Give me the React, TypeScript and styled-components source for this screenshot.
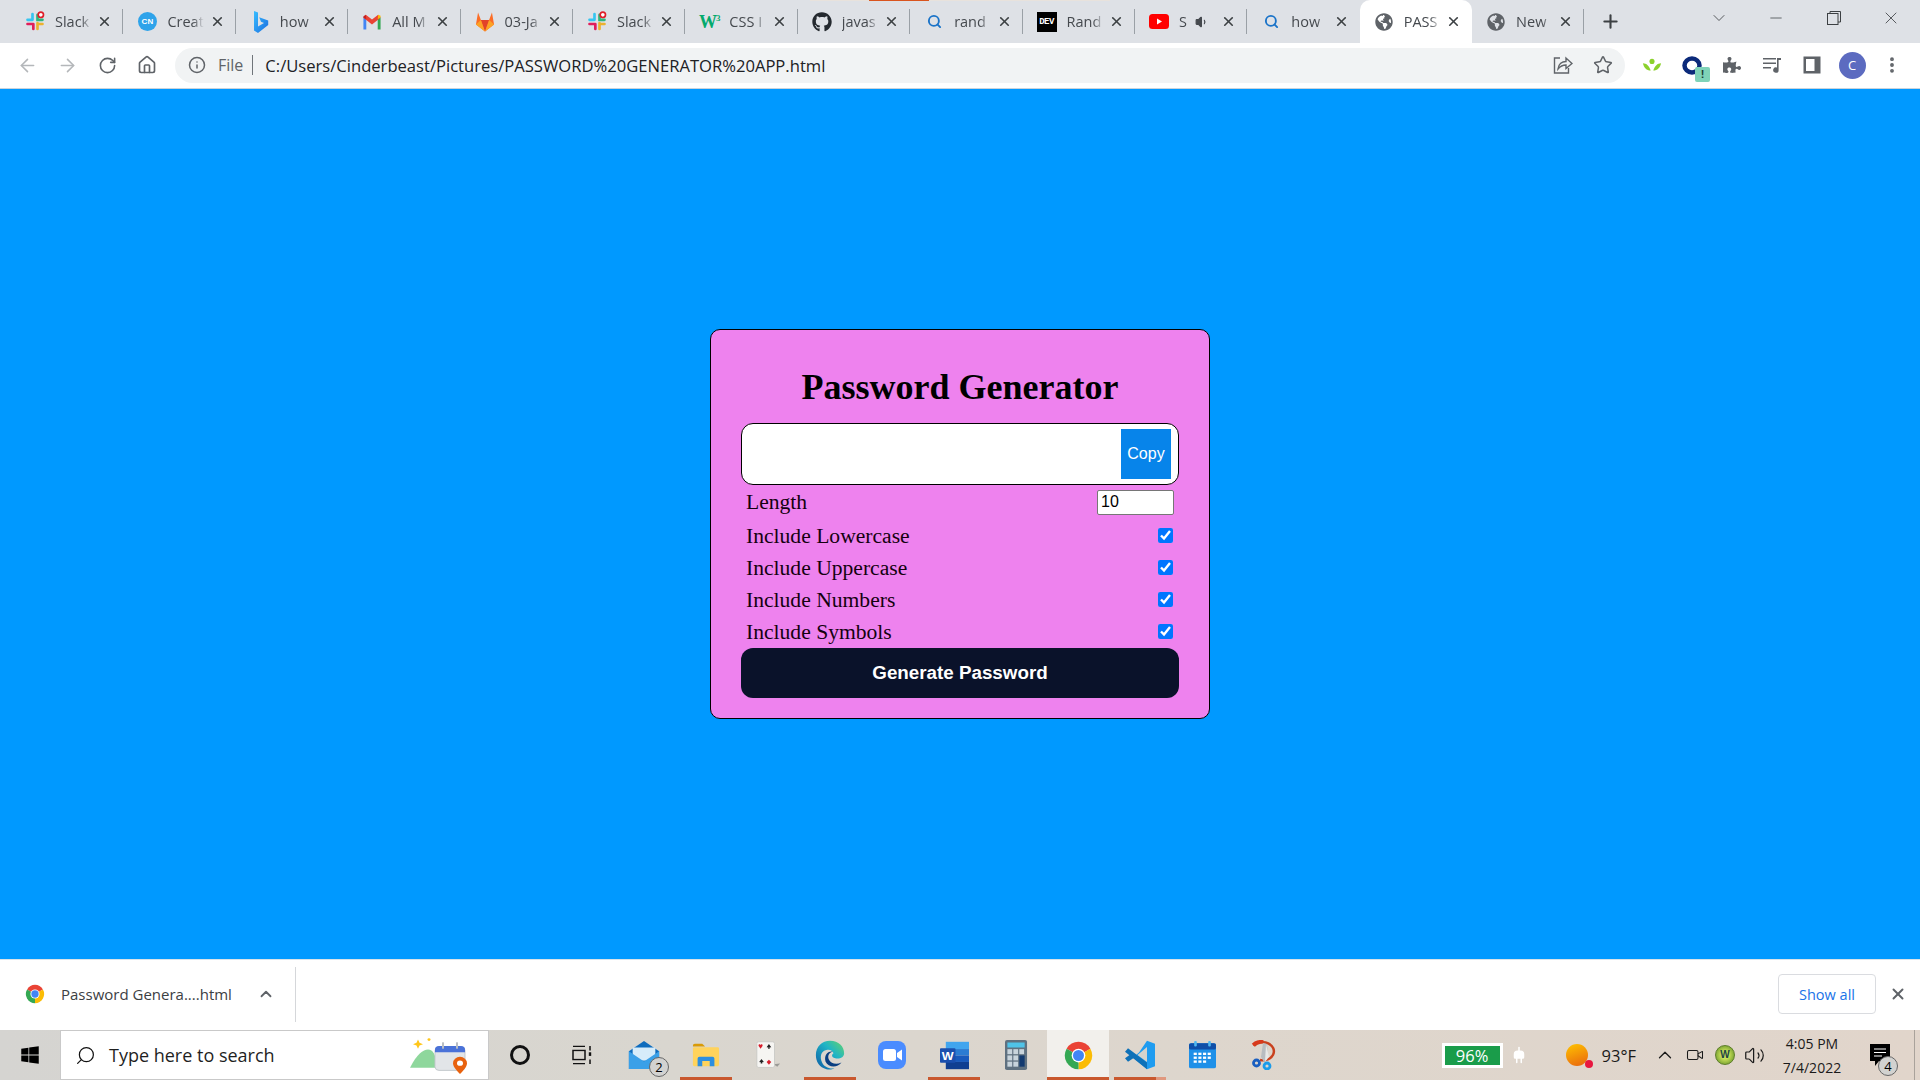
import React from 'react';
import styled, { createGlobalStyle } from 'styled-components';
import {
  ArrowLeft,
  ArrowRight,
  RotateCw,
  Home,
  Info,
  Star,
  X,
  Plus,
  ChevronDown,
  ChevronUp,
  Minus,
  Search,
  EllipsisVertical,
  Volume1,
  Volume2,
  Video,
  Plug,
} from 'lucide-react';
import { FaGithub, FaGlobeAmericas, FaPuzzlePiece, FaWindows } from 'react-icons/fa';

const GlobalStyle = createGlobalStyle`
  html, body {
    margin: 0;
    padding: 0;
    height: 100%;
    overflow: hidden;
  }
  * {
    box-sizing: border-box;
  }
`;

const uiFont = `"Open Sans", "Noto Sans", sans-serif`;

const Screen = styled.div`
  width: 1920px;
  height: 1080px;
  display: flex;
  flex-direction: column;
  font-family: ${uiFont};
`;

/* ---------- tab strip ---------- */

const TabStrip = styled.div`
  position: relative;
  height: 43px;
  flex: none;
  display: flex;
  align-items: stretch;
  padding-left: 11px;
  background: #dee1e6;
`;

const LoadingLine = styled.div`
  position: absolute;
  top: 0;
  left: 810px;
  width: 300px;
  height: 1px;
  background: #e8e2dc;

  &::after {
    content: '';
    position: absolute;
    top: 0;
    left: 59px;
    width: 60px;
    height: 1px;
    background: #d9541e;
  }
`;

const TabItem = styled.div<{ $active?: boolean; $divider?: boolean }>`
  position: relative;
  width: 112.4px;
  flex: none;
  display: flex;
  align-items: center;
  padding: 0 11px 0 14px;
  border-radius: 10px 10px 0 0;
  background: ${({ $active }) => ($active ? '#fff' : 'transparent')};

  &::after {
    content: '';
    display: ${({ $divider }) => ($divider ? 'block' : 'none')};
    position: absolute;
    right: 0;
    top: 9px;
    height: 25px;
    width: 1px;
    background: #9aa0a6;
  }
`;

const FaviconSlot = styled.span`
  width: 20px;
  height: 20px;
  flex: none;
  display: flex;
  align-items: center;
  justify-content: center;
`;

const TabTitle = styled.span<{ $narrow?: boolean }>`
  margin-left: 10px;
  width: ${({ $narrow }) => ($narrow ? '10px' : '37px')};
  flex: none;
  overflow: hidden;
  white-space: nowrap;
  font-size: 14.5px;
  color: #45494e;
  -webkit-mask-image: linear-gradient(90deg, #000 70%, transparent 100%);
  mask-image: linear-gradient(90deg, #000 70%, transparent 100%);
`;

const TabClose = styled.span`
  margin-left: auto;
  display: flex;
  color: #3c4043;
`;

const MuteIcon = styled.span`
  margin-left: 6px;
  display: flex;
  color: #45494e;
`;

const CnBadge = styled.span`
  width: 19px;
  height: 19px;
  border-radius: 50%;
  background: #2ea3ea;
  color: #fff;
  font: bold 8px 'Liberation Sans', sans-serif;
  display: flex;
  align-items: center;
  justify-content: center;
`;

const W3Mark = styled.span`
  color: #04aa6d;
  font: bold 18px/20px 'Liberation Serif', serif;
  letter-spacing: -1px;

  sup {
    font-size: 9px;
    line-height: 0;
    color: #04aa6d;
  }
`;

const DevMark = styled.span`
  width: 20px;
  height: 20px;
  background: #000;
  color: #fff;
  font: bold 9px/20px 'Liberation Mono', monospace;
  letter-spacing: -0.5px;
  text-align: center;
`;

const NewTabButton = styled.div`
  width: 52px;
  flex: none;
  display: flex;
  align-items: center;
  justify-content: center;
  color: #3c4043;
`;

const WindowControls = styled.div`
  margin-left: auto;
  display: flex;
  height: 36px;
  color: #3c4043;
`;

const WindowButton = styled.div<{ $w?: number }>`
  width: ${({ $w }) => $w ?? 57.5}px;
  display: flex;
  align-items: center;
  justify-content: center;
`;

const RestoreIcon = () => (
  <svg width="14" height="14" viewBox="0 0 14 14" fill="none" stroke="#3c4043" strokeWidth="1">
    <rect x="0.5" y="2.5" width="10.5" height="11" />
    <path d="M3 2.5V.5h10.5v10.5H11" />
  </svg>
);

/* ---------- toolbar ---------- */

const Toolbar = styled.div`
  height: 46px;
  flex: none;
  display: flex;
  align-items: center;
  padding: 0 8px 1px 7px;
  background: #fff;
  border-bottom: 1px solid #c9d3dc;
`;

const ToolButton = styled.div<{ $dim?: boolean }>`
  width: 40px;
  height: 35px;
  flex: none;
  display: flex;
  align-items: center;
  justify-content: center;
  color: ${({ $dim }) => ($dim ? '#b4b7ba' : '#5f6368')};
`;

const Omnibox = styled.div`
  flex: 1;
  height: 35px;
  margin: 0 7px 0 8px;
  display: flex;
  align-items: center;
  padding: 0 2px 0 13px;
  border-radius: 18px;
  background: #f1f3f4;
`;

const SchemeLabel = styled.span`
  margin-left: 12px;
  padding-right: 9px;
  border-right: 1px solid #70757a;
  font-size: 16px;
  line-height: 20px;
  color: #5f6368;
`;

const UrlText = styled.span`
  margin-left: 12px;
  flex: 1;
  font-size: 16.6px;
  color: #202124;
  white-space: nowrap;
`;

const Avatar = styled.span`
  width: 27px;
  height: 27px;
  border-radius: 50%;
  background: #5c6bc0;
  color: #fff;
  font: 13px/27px ${uiFont};
  text-align: center;
`;

const ExtensionWrap = styled.span`
  position: relative;
  display: flex;
`;

const ExtensionBadge = styled.span`
  position: absolute;
  right: -8px;
  bottom: -7px;
  width: 15px;
  height: 15px;
  border-radius: 2px;
  background: #7fd3b8;
  color: #1d3b33;
  font: bold 11px/15px 'Liberation Sans', sans-serif;
  text-align: center;
`;

/* ---------- page with the generator card ---------- */

const Page = styled.main`
  flex: 1;
  display: flex;
  align-items: center;
  justify-content: center;
  background: #0099ff;
`;

const Card = styled.section`
  width: 500px;
  height: 390px;
  padding: 36px 30px 20px;
  border: 1px solid #000;
  border-radius: 10px;
  background: #ee82ee;
  font-family: 'Liberation Serif', serif;
`;

const Title = styled.h2`
  margin: 0 0 17px;
  padding-top: 1px;
  height: 40px;
  font-size: 36px;
  line-height: 40px;
  font-weight: bold;
  text-align: center;
  color: #000;
`;

const ResultBox = styled.div`
  height: 62px;
  display: flex;
  align-items: center;
  justify-content: flex-end;
  padding-right: 7px;
  border: 1px solid #000;
  border-radius: 12px;
  background: #fff;
`;

const CopyButton = styled.button`
  width: 50px;
  height: 50px;
  padding: 0;
  border: none;
  background: #0784ea;
  color: #fff;
  font: 16px 'Liberation Sans', sans-serif;
`;

const OptionRow = styled.label<{ $tall?: boolean }>`
  height: ${({ $tall }) => ($tall ? 35 : 32)}px;
  display: flex;
  align-items: center;
  justify-content: space-between;
  padding: 0 6px 0 5px;
  font-size: 21.6px;
  color: #14010f;
`;

const LengthRow = styled(OptionRow)`
  padding-right: 5px;
  padding-bottom: 1px;
`;

const LengthInput = styled.input`
  width: 77px;
  height: 25px;
  padding: 1px 3px;
  border: 1px solid #767676;
  border-radius: 2px;
  background: #fff;
  font: 16px 'Liberation Sans', sans-serif;
  color: #000;
`;

const OptionCheck = styled.input`
  width: 15px;
  height: 15px;
  margin: 0 0 1px;
  accent-color: #0075ff;
`;

const GenerateButton = styled.button`
  width: 100%;
  height: 50px;
  border: none;
  border-radius: 12px;
  background: #0a122a;
  color: #fff;
  font: bold 18.8px 'Liberation Sans', sans-serif;
`;

/* ---------- download shelf ---------- */

const DownloadBar = styled.div`
  height: 71px;
  flex: none;
  display: flex;
  align-items: center;
  padding: 0 0 2px 24px;
  background: #fff;
  border-top: 1px solid #d8e2e8;
`;

const DownloadName = styled.span`
  margin-left: 15px;
  width: 196px;
  font-size: 15px;
  color: #3c4043;
  white-space: nowrap;
`;

const ShelfDivider = styled.span`
  width: 1px;
  height: 55px;
  margin-left: 20px;
  background: #d5d7da;
`;

const ShowAllButton = styled.button`
  margin-left: auto;
  width: 98px;
  height: 40px;
  border: 1px solid #dadce0;
  border-radius: 4px;
  background: #fff;
  color: #1a73e8;
  font: 14.5px ${uiFont};
`;

const ShelfClose = styled.span`
  width: 44px;
  display: flex;
  justify-content: center;
  color: #5f6368;
`;

/* ---------- taskbar ---------- */

const Taskbar = styled.footer`
  height: 50px;
  flex: none;
  display: flex;
  align-items: stretch;
  background: linear-gradient(90deg, #d5d4d1 0%, #d9d6cf 35%, #ddd6cd 60%, #e1d5cb 100%);
`;

const StartButton = styled.div`
  width: 60px;
  flex: none;
  display: flex;
  align-items: center;
  justify-content: center;
  color: #000;
`;

const SearchBox = styled.div`
  width: 429px;
  flex: none;
  display: flex;
  align-items: center;
  padding: 0 19px 0 14px;
  border: 1px solid #c9c9c9;
  background: #fff;
`;

const SearchText = styled.span`
  margin-left: 13px;
  font-size: 18px;
  color: #1f1f1f;
`;

const SearchArt = styled.span`
  margin-left: auto;
  display: flex;
`;

const TaskSlot = styled.div<{ $mark?: 'short' | 'full' | 'split'; $active?: boolean }>`
  position: relative;
  width: 62px;
  flex: none;
  display: flex;
  align-items: center;
  justify-content: center;
  background: ${({ $active }) => ($active ? '#f2f0ec' : 'transparent')};

  &::after {
    content: '';
    display: ${({ $mark }) => ($mark ? 'block' : 'none')};
    position: absolute;
    bottom: 0;
    height: 3px;
    left: ${({ $mark }) => ($mark === 'full' ? 0 : 5)}px;
    right: ${({ $mark }) => ($mark === 'full' ? 0 : 5)}px;
    background: ${({ $mark }) =>
      $mark === 'split'
        ? 'linear-gradient(90deg, #c9582e 80%, #e0987e 80%)'
        : '#c9582e'};
  }
`;

const CountBadge = styled.span<{ $r: number; $b: number }>`
  position: absolute;
  right: ${({ $r }) => $r}px;
  bottom: ${({ $b }) => $b}px;
  width: 20px;
  height: 20px;
  border-radius: 50%;
  border: 1px solid #666;
  background: #d2d2d0;
  color: #000;
  font: 13px/18px ${uiFont};
  text-align: center;
`;

const Tray = styled.div`
  margin-left: auto;
  padding-right: 5px;
  display: flex;
  align-items: center;
  color: #1a1a1a;
`;

const BatteryBox = styled.span`
  width: 61px;
  height: 25px;
  border: 3px solid #fff;
  background: #1a9c4a;
  color: #fff;
  font-size: 16.5px;
  line-height: 19px;
  text-align: center;
`;

const PlugWrap = styled.span`
  margin-left: 6px;
  width: 20px;
  display: flex;
  justify-content: center;
  color: #fff;
`;

const WeatherWrap = styled.span`
  position: relative;
  margin-left: 37px;
  width: 22px;
  height: 22px;
  border-radius: 50%;
  background: linear-gradient(160deg, #ffc400, #e8630f);

  &::after {
    content: '';
    position: absolute;
    right: -5px;
    bottom: -2px;
    width: 8px;
    height: 8px;
    border-radius: 50%;
    background: #e8173f;
  }
`;

const Temperature = styled.span`
  margin-left: 14px;
  font-size: 16.5px;
`;

const TrayIcon = styled.span<{ $gap: number }>`
  margin-left: ${({ $gap }) => $gap}px;
  display: flex;
`;

const WgetDot = styled.span`
  width: 20px;
  height: 20px;
  border-radius: 50%;
  background: radial-gradient(circle, #c8e05a 30%, #6e9a2c 85%);
  border: 1px solid #5d7d2a;
  color: #244;
  font: bold 10px/18px 'Liberation Sans', sans-serif;
  text-align: center;
`;

const Clock = styled.div`
  margin-left: 14px;
  width: 66px;
  display: flex;
  flex-direction: column;
  align-items: center;
  gap: 5px;
  font-size: 14px;
  line-height: 19px;
  white-space: nowrap;
`;

const NotifySlot = styled.div`
  position: relative;
  width: 70px;
  height: 50px;
  display: flex;
  align-items: center;
  justify-content: center;
  border-right: 1px solid #a9a29b;
`;

/* ---------- logos ---------- */

const ChromeLogo = ({ size }: { size: number }) => (
  <svg width={size} height={size} viewBox="0 0 48 48">
    <path d="M24 24L6.7 14A20 20 0 0 1 41.3 14Z" fill="#ea4335" />
    <path d="M24 24L41.3 14A20 20 0 0 1 24 44Z" fill="#fbbc05" />
    <path d="M24 24L24 44A20 20 0 0 1 6.7 14Z" fill="#34a853" />
    <circle cx="24" cy="24" r="10" fill="#fff" />
    <circle cx="24" cy="24" r="8" fill="#4285f4" />
  </svg>
);

const SlackLogo = () => (
  <svg width="21" height="21" viewBox="0 0 24 24" fill="none" strokeWidth="3.2" strokeLinecap="round">
    <path d="M9 3v7M3 10h6" stroke="#36c5f0" />
    <path d="M10 15H3M10 15v6" stroke="#e01e5a" />
    <path d="M15 14v7M15 15h6" stroke="#ecb22e" />
    <path d="M15 4v6h6" stroke="#2eb67d" />
    <circle cx="19" cy="4" r="3.2" fill="#fff" stroke="#e01e2a" strokeWidth="2" />
  </svg>
);

const BingLogo = () => (
  <svg width="20" height="24" viewBox="0 0 20 24">
    <defs>
      <linearGradient id="bingFill" x1="0" y1="0" x2="1" y2="1">
        <stop offset="0" stopColor="#37bdff" />
        <stop offset="1" stopColor="#1b6ee0" />
      </linearGradient>
    </defs>
    <path d="M4 1l4 1.5v14l6-3.4-3-1.4-1.8-4.4 9 3.2v4.6L8 23l-4-2.4z" fill="url(#bingFill)" />
  </svg>
);

const GmailLogo = () => (
  <svg width="21" height="18" viewBox="0 0 21 18">
    <path d="M1.5 17V4l3 2v11z" fill="#4285f4" />
    <path d="M16.5 17V6l3-2v13z" fill="#34a853" />
    <path d="M1.5 4.5L4 1.5l6.5 5 6.5-5 2.5 3-9 7z" fill="#ea4335" />
    <path d="M16.5 6l3-2 0-1.5L17 1.5z" fill="#fbbc05" />
    <path d="M1.5 4.5V3L4 1.5 4.5 6z" fill="#c5221f" />
  </svg>
);

const GitlabLogo = () => (
  <svg width="21" height="22" viewBox="0 0 21 22">
    <path d="M10.5 21L1 13.5 3.2 1l3 8h8.6l3-8L20 13.5z" fill="#fc6d26" />
    <path d="M10.5 21L6.2 9h8.6z" fill="#e24329" />
    <path d="M10.5 21L1 13.5 6.2 9zM10.5 21L20 13.5 14.8 9z" fill="#fca326" />
  </svg>
);

const YoutubeLogo = () => (
  <svg width="20" height="15" viewBox="0 0 20 15">
    <rect width="20" height="15" rx="3.5" fill="#f00" />
    <path d="M8 4.5l5 3-5 3z" fill="#fff" />
  </svg>
);

const SearchFavicon = () => <Search size={15} strokeWidth={3} color="#1a73c8" />;
const GlobeFavicon = () => <FaGlobeAmericas size={18} color="#5f6368" />;

const SpriteLogo = () => (
  <svg width="20" height="15" viewBox="0 0 22 15" fill="#8bd12c">
    <circle cx="11" cy="3" r="2.8" />
    <path d="M1 5c4 0 7 3 8.6 8C5 13 2 10 1 5zM21 5c-4 0-7 3-8.6 8C17 13 20 10 21 5z" />
  </svg>
);

const RingLogo = () => (
  <svg width="20" height="19" viewBox="0 0 20 19" fill="none">
    <ellipse cx="10" cy="9.5" rx="7.5" ry="7" stroke="#0b2a7a" strokeWidth="4.5" />
  </svg>
);

const MediaQueueIcon = () => (
  <svg width="20" height="18" viewBox="0 0 20 18" fill="#5f6368">
    <path d="M1 2h13v1.6H1zM1 6.5h13v1.6H1zM1 11h8v1.6H1z" />
    <path d="M15 2h4v2h-2.4v10a2.7 2.7 0 1 1-1.6-2.4z" />
  </svg>
);

const SidePanelIcon = () => (
  <svg width="18" height="18" viewBox="0 0 18 18">
    <rect x="0.5" y="0.5" width="17" height="17" fill="#5f6368" />
    <rect x="3" y="3" width="8.5" height="12" fill="#fff" />
  </svg>
);

const ShareIcon = () => (
  <svg width="20" height="20" viewBox="0 0 20 20" fill="none" stroke="#5f6368" strokeWidth="1.4">
    <path d="M7 3H1.5v15h14v-5" />
    <path d="M5 14c.5-5 4-7.5 8-7.5V3l6 5.5-6 5V10c-3.500 0-6 1.500-8 4z" />
  </svg>
);

const SearchArtwork = () => (
  <svg width="60" height="38" viewBox="0 0 60 42" preserveAspectRatio="none">
    <path d="M1 35C8 20 14 15 19 15s8 5 9 20z" fill="#8ed79c" />
    <path d="M9 4l1.500 3.500L14 9l-3.500 1.500L9 14l-1.500-3.500L4 9l3.500-1.500z" fill="#ffc61a" />
    <circle cx="20" cy="4" r="1.500" fill="#ffc61a" />
    <rect x="26" y="12" width="30" height="26" rx="4" fill="#e2e5e8" stroke="#c2c7cb" />
    <path d="M26 18v-3a4 4 0 0 1 4-4h22a4 4 0 0 1 4 4v3z" fill="#4a72d8" />
    <rect x="33" y="7" width="2" height="7" fill="#b9bec4" />
    <rect x="47" y="7" width="2" height="7" fill="#b9bec4" />
    <path d="M51 42c-5-6-7-9-7-12a7 7 0 0 1 14 0c0 3-2 6-7 12z" fill="#e8620f" />
    <circle cx="51" cy="30" r="3" fill="#fff" />
  </svg>
);

const TaskViewIcon = () => (
  <svg width="20" height="20" viewBox="0 0 20 22" fill="none" stroke="#111" strokeWidth="1.500" preserveAspectRatio="none">
    <path d="M1 1.500h12M1 20.500h12" />
    <rect x="1" y="6" width="12" height="10" />
    <path d="M18 1v5M18 16v5" />
    <rect x="16.800" y="8" width="2.400" height="4" fill="#111" stroke="none" />
  </svg>
);

const CortanaRing = () => (
  <svg width="22" height="22" viewBox="0 0 22 22" fill="none">
    <circle cx="11" cy="11" r="8.500" stroke="#111" strokeWidth="3" />
  </svg>
);

const MailIcon = () => (
  <svg width="34" height="30" viewBox="0 0 36 32" preserveAspectRatio="none">
    <path d="M2 12L18 1l16 11v19H2z" fill="#0f6cbd" />
    <path d="M6 8h24v14H6z" fill="#d6ecfa" />
    <path d="M2 12l16 11 16-11v19H2z" fill="#3aa0e8" />
  </svg>
);

const FolderIcon = () => (
  <svg width="28" height="24" viewBox="0 0 30 28" preserveAspectRatio="none">
    <path d="M1 3a2 2 0 0 1 2-2h8l3 3H1z" fill="#d99a06" />
    <rect x="1" y="5" width="28" height="22" rx="1.500" fill="#ffd35c" />
    <path d="M6 27v-9a2 2 0 0 1 2-2h14a2 2 0 0 1 2 2v9h-5v-6h-8v6z" fill="#2d8fe0" />
  </svg>
);

const CardsIcon = () => (
  <svg width="26" height="28" viewBox="0 0 28 36" preserveAspectRatio="none">
    <path d="M20 30l7-1-3 4z" fill="#9a9a96" />
    <rect x="2" y="1" width="19" height="33" rx="2" fill="#f6f5f2" stroke="#c8c8c4" />
    <path d="M6 5c-2-2-3 1-1.500 2.500L6 10l1.500-2.500C9 6 8 3 6 5z" fill="#d81e2c" />
    <path d="M15 4l2.500 4-2 .5.500 1.500h-2l.500-1.500-2-.5z" fill="#222" />
    <path d="M7 23l2.500 4-2 .5.500 1.500H6l.500-1.500-2-.5z" fill="#222" />
    <path d="M15 24l2.500 3-2.500 3.500-2.500-3.500z" fill="#d81e2c" />
  </svg>
);

const EdgeIcon = () => (
  <svg width="30" height="30" viewBox="0 0 34 36" preserveAspectRatio="none">
    <defs>
      <linearGradient id="edgeRing" x1="0" y1="1" x2="1" y2="0">
        <stop offset="0" stopColor="#0c59a4" />
        <stop offset="0.6" stopColor="#1fb5c6" />
        <stop offset="1" stopColor="#66d46a" />
      </linearGradient>
    </defs>
    <path d="M17 1C27 1 33 8 33 16c0 5-5 7-10 6s-4-5-2-6c-1-3-4-5-8-4C7 13 5 20 8 27c2 5 8 8 14 7-3 2-7 1.500-9 1C5 33 1 26 1 18 1 8 8 1 17 1z" fill="url(#edgeRing)" />
    <path d="M12 26c-2-7 2-13 8-12-5 1-6 6-4 10s8 6 14 3c-5 7-15 6-18-1z" fill="#0a3f82" />
  </svg>
);

const ZoomIcon = () => (
  <svg width="28" height="28" viewBox="0 0 28 28">
    <rect width="28" height="28" rx="8" fill="#4a8cff" />
    <rect x="5" y="8" width="13" height="12" rx="2.500" fill="#fff" />
    <path d="M19 12l5-3.500v11L19 16z" fill="#fff" />
  </svg>
);

const WordIcon = () => (
  <svg width="29" height="29" viewBox="0 0 30 36" preserveAspectRatio="none">
    <rect x="6" y="1" width="24" height="9" fill="#41a5ee" />
    <rect x="6" y="10" width="24" height="8" fill="#2b7cd3" />
    <rect x="6" y="18" width="24" height="8" fill="#185abd" />
    <rect x="6" y="26" width="24" height="9" fill="#103f91" />
    <rect y="9" width="16" height="18" rx="1" fill="#1a4fae" />
    <text x="8" y="23" textAnchor="middle" fontFamily="Liberation Sans" fontWeight="bold" fontSize="13" fill="#fff">W</text>
  </svg>
);

const CalculatorIcon = () => {
  const cells = [0, 1, 2].flatMap((row) => [0, 1, 2].map((col) => ({ row, col })));
  return (
    <svg width="23" height="30" viewBox="0 0 24 36" preserveAspectRatio="none">
      <rect width="23" height="36" rx="2" fill="#5f7180" />
      <rect x="2.500" y="3" width="18" height="6" fill="#4fc3e8" />
      {cells.map(({ row, col }) =>
        row > 0 && col === 2 ? null : (
          <rect key={`${row}-${col}`} x={2.500 + col * 6.200} y={11 + row * 7.500} width="5" height="6" fill="#c8d4dc" />
        ),
      )}
      <rect x="15" y="18.500" width="5.500" height="13.500" fill="#123a70" />
    </svg>
  );
};

const VscodeIcon = () => (
  <svg width="30" height="30" viewBox="0 0 30 36" preserveAspectRatio="none">
    <path d="M22 1l8 3.500v27L22 35 8 21l6-6z" fill="#1f9cf0" />
    <path d="M3 10l19 17v8L0 14zM0 22l8-7 4 4-9 7z" fill="#0e71b8" />
    <path d="M22 8.500L12.500 18l9.500 8.500z" fill="#d6d3cc" />
  </svg>
);

const CalendarIcon = () => {
  const dots = [0, 1, 2].flatMap((row) => [0, 1, 2, 3].map((col) => ({ row, col })));
  return (
    <svg width="27" height="28" viewBox="0 0 26 36" preserveAspectRatio="none">
      <rect y="3" width="26" height="32" rx="2" fill="#1e90e8" />
      <rect y="3" width="26" height="8" rx="2" fill="#0f4fa8" />
      <rect x="5" width="2.500" height="7" rx="1" fill="#4fb8f0" />
      <rect x="18.500" width="2.500" height="7" rx="1" fill="#4fb8f0" />
      {dots.map(({ row, col }) =>
        row === 2 && col === 3 ? null : (
          <rect key={`${row}-${col}`} x={4.500 + col * 4.500} y={15 + row * 5} width="3" height="3" fill="#fff" />
        ),
      )}
    </svg>
  );
};

const SnipIcon = () => (
  <svg width="27" height="30" viewBox="0 0 27 30" fill="none">
    <path d="M3 6a11 9 0 1 1 6 14" stroke="#c9411e" strokeWidth="2.500" />
    <path d="M2 5c3-3 8-4 10-3" stroke="#d8391c" strokeWidth="3.500" />
    <path d="M12 3l4 1 1 13-4 5-3-5z" fill="#b8bcc0" />
    <path d="M15 4l3 13-4 5z" fill="#e8e8e6" />
    <circle cx="5.500" cy="23" r="3" stroke="#1a5fc0" strokeWidth="2.800" />
    <circle cx="16" cy="26" r="3" stroke="#1a9bea" strokeWidth="2.800" />
  </svg>
);

const NotifyIcon = () => (
  <svg width="20" height="22" viewBox="0 0 20 22">
    <path d="M0 0h20v17H9l-4 5v-5H0z" fill="#000" />
    <path d="M4 5h12M4 8.500h12M4 12h8" stroke="#fff" strokeWidth="1.200" />
  </svg>
);

/* ---------- data ---------- */

type TabInfo = {
  title: string;
  icon: React.ReactNode;
  muted?: boolean;
  active?: boolean;
  divider?: boolean;
};

const tabs: TabInfo[] = [
  { title: 'Slack', icon: <SlackLogo />, divider: true },
  { title: 'Creat', icon: <CnBadge>CN</CnBadge>, divider: true },
  { title: 'how', icon: <BingLogo />, divider: true },
  { title: 'All M', icon: <GmailLogo />, divider: true },
  { title: '03-Ja', icon: <GitlabLogo />, divider: true },
  { title: 'Slack', icon: <SlackLogo />, divider: true },
  { title: 'CSS I', icon: <W3Mark>W<sup>3</sup></W3Mark>, divider: true },
  { title: 'javas', icon: <FaGithub size={20} color="#24292f" />, divider: true },
  { title: 'rand', icon: <SearchFavicon />, divider: true },
  { title: 'Rand', icon: <DevMark>DEV</DevMark>, divider: true },
  { title: 'S', icon: <YoutubeLogo />, muted: true, divider: true },
  { title: 'how', icon: <SearchFavicon /> },
  { title: 'PASS', icon: <GlobeFavicon />, active: true },
  { title: 'New', icon: <GlobeFavicon />, divider: true },
];

const options = ['Include Lowercase', 'Include Uppercase', 'Include Numbers', 'Include Symbols'];

const taskApps: { icon: React.ReactNode; mark?: 'short' | 'full' | 'split'; active?: boolean; badge?: string }[] = [
  { icon: <CortanaRing /> },
  { icon: <TaskViewIcon /> },
  { icon: <MailIcon />, badge: '2' },
  { icon: <FolderIcon />, mark: 'short' },
  { icon: <CardsIcon /> },
  { icon: <EdgeIcon />, mark: 'short' },
  { icon: <ZoomIcon /> },
  { icon: <WordIcon />, mark: 'short' },
  { icon: <CalculatorIcon /> },
  { icon: <ChromeLogo size={33} />, mark: 'full', active: true },
  { icon: <VscodeIcon />, mark: 'split' },
  { icon: <CalendarIcon /> },
  { icon: <SnipIcon /> },
];

const App: React.FC = () => {
  return (
    <Screen>
      <GlobalStyle />

      <TabStrip>
        <LoadingLine />
        {tabs.map((tab, index) => (
          <TabItem key={index} $active={tab.active} $divider={tab.divider}>
            <FaviconSlot>{tab.icon}</FaviconSlot>
            <TabTitle $narrow={tab.muted}>{tab.title}</TabTitle>
            {tab.muted && (
              <MuteIcon>
                <Volume1 size={14} fill="#45494e" />
              </MuteIcon>
            )}
            <TabClose>
              <X size={15} strokeWidth={2.6} />
            </TabClose>
          </TabItem>
        ))}
        <NewTabButton>
          <Plus size={21} strokeWidth={2.4} />
        </NewTabButton>
        <WindowControls>
          <WindowButton $w={58}>
            <ChevronDown size={20} strokeWidth={1} />
          </WindowButton>
          <WindowButton>
            <Minus size={18} strokeWidth={1} />
          </WindowButton>
          <WindowButton>
            <RestoreIcon />
          </WindowButton>
          <WindowButton>
            <X size={20} strokeWidth={1} />
          </WindowButton>
        </WindowControls>
      </TabStrip>

      <Toolbar>
        <ToolButton $dim>
          <ArrowLeft size={21} strokeWidth={1.8} />
        </ToolButton>
        <ToolButton $dim>
          <ArrowRight size={21} strokeWidth={1.8} />
        </ToolButton>
        <ToolButton>
          <RotateCw size={19} strokeWidth={2} />
        </ToolButton>
        <ToolButton>
          <Home size={20} strokeWidth={2} />
        </ToolButton>
        <Omnibox>
          <Info size={18} strokeWidth={2} color="#5f6368" />
          <SchemeLabel>File</SchemeLabel>
          <UrlText>C:/Users/Cinderbeast/Pictures/PASSWORD%20GENERATOR%20APP.html</UrlText>
          <ToolButton>
            <ShareIcon />
          </ToolButton>
          <ToolButton>
            <Star size={20} strokeWidth={1.8} />
          </ToolButton>
        </Omnibox>
        <ToolButton>
          <SpriteLogo />
        </ToolButton>
        <ToolButton>
          <ExtensionWrap>
            <RingLogo />
            <ExtensionBadge>!</ExtensionBadge>
          </ExtensionWrap>
        </ToolButton>
        <ToolButton>
          <FaPuzzlePiece size={18} />
        </ToolButton>
        <ToolButton>
          <MediaQueueIcon />
        </ToolButton>
        <ToolButton>
          <SidePanelIcon />
        </ToolButton>
        <ToolButton>
          <Avatar>C</Avatar>
        </ToolButton>
        <ToolButton>
          <EllipsisVertical size={20} strokeWidth={2.6} />
        </ToolButton>
      </Toolbar>

      <Page>
        <Card>
          <Title>Password Generator</Title>
          <ResultBox>
            <CopyButton>Copy</CopyButton>
          </ResultBox>
          <LengthRow $tall>
            Length
            <LengthInput type="number" defaultValue={10} />
          </LengthRow>
          {options.map((option) => (
            <OptionRow key={option}>
              {option}
              <OptionCheck type="checkbox" defaultChecked />
            </OptionRow>
          ))}
          <GenerateButton>Generate Password</GenerateButton>
        </Card>
      </Page>

      <DownloadBar>
        <ChromeLogo size={22} />
        <DownloadName>Password Genera....html</DownloadName>
        <ChevronUp size={18} strokeWidth={2.4} color="#5f6368" />
        <ShelfDivider />
        <ShowAllButton>Show all</ShowAllButton>
        <ShelfClose>
          <X size={18} strokeWidth={2.6} />
        </ShelfClose>
      </DownloadBar>

      <Taskbar>
        <StartButton>
          <FaWindows size={20} />
        </StartButton>
        <SearchBox>
          <Search size={21} strokeWidth={1.4} color="#111" style={{ transform: 'scaleX(-1)' }} />
          <SearchText>Type here to search</SearchText>
          <SearchArt>
            <SearchArtwork />
          </SearchArt>
        </SearchBox>
        {taskApps.map((app, index) => (
          <TaskSlot key={index} $mark={app.mark} $active={app.active}>
            {app.icon}
            {app.badge && <CountBadge $r={6} $b={3}>{app.badge}</CountBadge>}
          </TaskSlot>
        ))}
        <Tray>
          <BatteryBox>96%</BatteryBox>
          <PlugWrap>
            <Plug size={18} fill="#fff" strokeWidth={2} style={{ transform: 'rotate(180deg)' }} />
          </PlugWrap>
          <WeatherWrap />
          <Temperature>93°F</Temperature>
          <TrayIcon $gap={18}>
            <ChevronUp size={22} strokeWidth={1.4} />
          </TrayIcon>
          <TrayIcon $gap={10}>
            <Video size={18} strokeWidth={1.4} />
          </TrayIcon>
          <TrayIcon $gap={11}>
            <WgetDot>W</WgetDot>
          </TrayIcon>
          <TrayIcon $gap={9}>
            <Volume2 size={21} strokeWidth={1.4} />
          </TrayIcon>
          <Clock>
            <span>4:05 PM</span>
            <span>7/4/2022</span>
          </Clock>
          <NotifySlot>
            <NotifyIcon />
            <CountBadge $r={16} $b={4}>4</CountBadge>
          </NotifySlot>
        </Tray>
      </Taskbar>
    </Screen>
  );
};

export default App;
